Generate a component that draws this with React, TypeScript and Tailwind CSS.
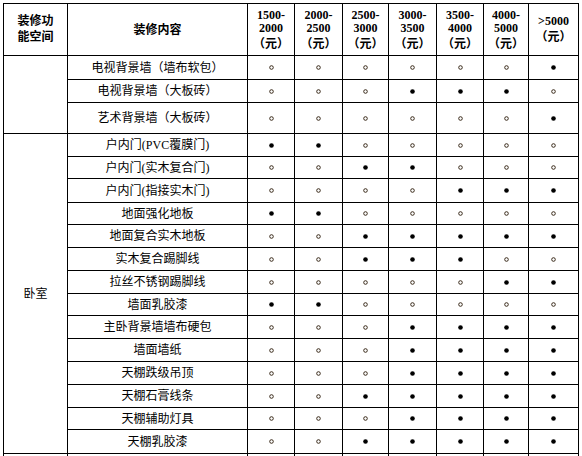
import React from "react";

const priceCols = [
  ["1500-", "2000"],
  ["2000-", "2500"],
  ["2500-", "3000"],
  ["3000-", "3500"],
  ["3500-", "4000"],
  ["4000-", "5000"],
];

// 1 = filled dot (recommended), 0 = hollow dot
const groups = [
  {
    space: "",
    items: [
      { name: "电视背景墙（墙布软包）", marks: "0000001" },
      { name: "电视背景墙（大板砖）", marks: "0001110" },
      { name: "艺术背景墙（大板砖）", marks: "0000001" },
    ],
  },
  {
    space: "卧室",
    items: [
      { name: "户内门(PVC覆膜门)", marks: "1100000" },
      { name: "户内门(实木复合门)", marks: "0011000" },
      { name: "户内门(指接实木门)", marks: "0000111" },
      { name: "地面强化地板", marks: "1100000" },
      { name: "地面复合实木地板", marks: "0011111" },
      { name: "实木复合踢脚线", marks: "0011100" },
      { name: "拉丝不锈钢踢脚线", marks: "0000011" },
      { name: "墙面乳胶漆", marks: "1100000" },
      { name: "主卧背景墙墙布硬包", marks: "0001111" },
      { name: "墙面墙纸", marks: "0001111" },
      { name: "天棚跌级吊顶", marks: "0001111" },
      { name: "天棚石膏线条", marks: "0011111" },
      { name: "天棚辅助灯具", marks: "0001111" },
      { name: "天棚乳胶漆", marks: "0011111" },
    ],
  },
  {
    space: "",
    items: [{ name: "", marks: "" }],
  },
];

const cell = "border-r border-b border-black flex items-center justify-center";

const Dot = ({ filled }: { filled: boolean }) => (
  <svg width="7" height="7" viewBox="0 0 7 7" className="block">
    {filled ? (
      <circle cx="3.5" cy="3.5" r="2.3" fill="#000" />
    ) : (
      <circle cx="3.5" cy="3.5" r="1.8" fill="none" stroke="#3a2a1a" strokeWidth="1" />
    )}
  </svg>
);

export default function App() {
  return (
    <div className="w-[582px] h-[456px] overflow-hidden bg-white text-black font-['Liberation_Serif','Noto_Sans_CJK_SC',serif] text-[12px]">
      <div className="ml-[3px] mt-[3px] w-[576px] grid grid-cols-[64px_180px_47px_48px_46px_48px_47px_45px_50px] grid-rows-[52px_24px_23px_31px_23px_22px_24px_22px_23px_23px_23px_22px_23px_23px_23px_23px_22px_24px_24px] border-l border-t border-black">
        {/* header */}
        <div className={`${cell} flex-col font-bold leading-[16px] pb-[1px]`}>
          <span>装修功</span>
          <span>能空间</span>
        </div>
        <div className={`${cell} font-bold`}>装修内容</div>
        {priceCols.map(([a, b]) => (
          <div key={a} className={`${cell} flex-col font-bold`}>
            <span className="h-[13px] leading-[13px]">{a}</span>
            <span className="h-[13px] leading-[13px]">{b}</span>
            <span className="h-[16px] leading-[16px] font-['Noto_Sans_CJK_SC',sans-serif]">（元）</span>
          </div>
        ))}
        <div className={`${cell} flex-col font-bold`}>
          <span className="h-[13px] leading-[13px]">&gt;5000</span>
          <span className="h-[16px] leading-[16px] font-['Noto_Sans_CJK_SC',sans-serif]">（元）</span>
        </div>

        {/* body */}
        {groups.map((g, gi) => (
          <React.Fragment key={gi}>
            <div
              className={`${cell} ${
                g.items.length === 3 ? "row-span-3" : g.items.length === 14 ? "row-span-14" : ""
              }`}
            >
              {g.space}
            </div>
            {g.items.map((it, ii) => (
              <React.Fragment key={ii}>
                <div className={`${cell} col-start-2`}>{it.name}</div>
                {Array.from({ length: 7 }).map((_, k) => (
                  <div key={k} className={cell}>
                    {it.marks && <Dot filled={it.marks[k] === "1"} />}
                  </div>
                ))}
              </React.Fragment>
            ))}
          </React.Fragment>
        ))}
      </div>
    </div>
  );
}
